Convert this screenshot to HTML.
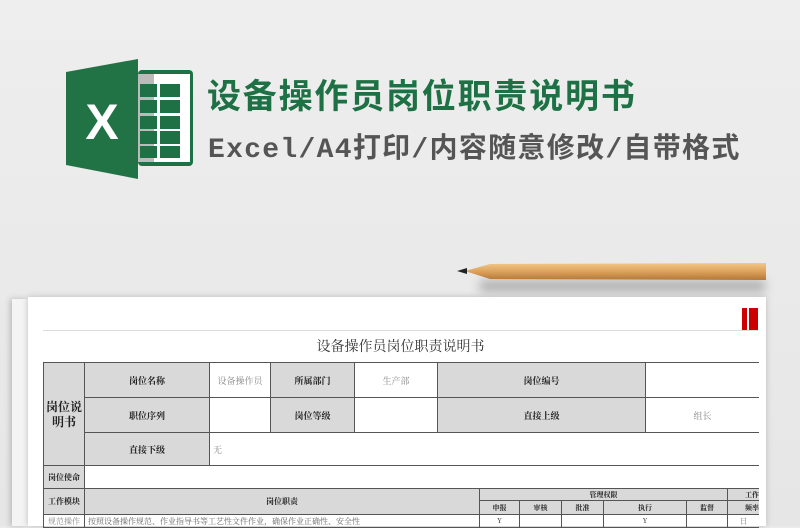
<!DOCTYPE html>
<html><head><meta charset="utf-8"><style>
*{margin:0;padding:0;box-sizing:border-box}
body{width:800px;height:526px;overflow:hidden;background:#ebebeb;position:relative;font-family:"Liberation Sans","Noto Sans CJK SC",sans-serif}
.a{position:absolute}
.c{position:absolute;border:1px solid #555;display:flex;align-items:center;justify-content:center;font-size:9px;color:#222;font-family:"Noto Serif CJK SC",serif;font-weight:bold}
.g{background:#d9d9d9}
.l{color:#888;font-weight:normal}
</style></head><body>
<div class="a" style="left:0;top:0;width:800px;height:526px;background:linear-gradient(#eeeeee,#e6e6e6)"></div>
<svg class="a" style="left:60px;top:55px" width="140" height="130">
<rect x="78" y="15" width="55" height="96" rx="4" fill="#1e7145"/>
<rect x="80" y="19" width="50" height="88" fill="#fff"/>
<rect x="78" y="19" width="16" height="88" fill="#bbb"/>
<g fill="#1e7145">
<rect x="80" y="29" width="17" height="13"/><rect x="100" y="29" width="20" height="13"/>
<rect x="80" y="45" width="17" height="13"/><rect x="100" y="45" width="20" height="13"/>
<rect x="80" y="61" width="17" height="13"/><rect x="100" y="61" width="20" height="13"/>
<rect x="80" y="76" width="17" height="13"/><rect x="100" y="76" width="20" height="13"/>
<rect x="80" y="91" width="17" height="12"/><rect x="100" y="91" width="20" height="12"/>
</g>
<polygon points="6,17 78,4 78,124 6,110" fill="#217346"/>
<text x="42" y="84" font-size="50" font-weight="bold" fill="#fff" text-anchor="middle" font-family="Liberation Sans Narrow,Liberation Sans,sans-serif">X</text>
</svg>
<div class="a" style="left:207px;top:72px;font-size:34px;font-weight:bold;color:#1e7145;font-family:'Noto Sans CJK SC',sans-serif;line-height:44px;letter-spacing:1.8px">设备操作员岗位职责说明书</div>
<div class="a" style="left:208px;top:133px;font-size:28px;color:#555;font-family:'Liberation Mono','Noto Sans CJK SC',monospace;line-height:36px;font-weight:bold;letter-spacing:1.3px">Excel/A4打印/内容随意修改/自带格式</div>
<div class="a" style="left:480px;top:280px;width:285px;height:12px;background:#999;filter:blur(5px);opacity:.7"></div>
<svg class="a" style="left:455px;top:260px" width="315" height="25">
<defs><linearGradient id="p" x1="0" y1="0" x2="0" y2="1"><stop offset="0" stop-color="#f2c888"/><stop offset=".5" stop-color="#dca25c"/><stop offset="1" stop-color="#b57838"/></linearGradient></defs>
<polygon points="10,11 35,4 311,3 311,20 35,19" fill="url(#p)"/>
<polygon points="2,11 12,8 12,14" fill="#222"/>
</svg>
<div class="a" style="left:12px;top:299px;width:16px;height:227px;background:#f4f4f4;box-shadow:-2px 0 6px #bbb"></div>
<div class="a" style="left:28px;top:297px;width:738px;height:229px;background:#fff;box-shadow:0 0 6px #bbb"></div>
<div class="a" style="left:742px;top:308px;width:5px;height:22px;background:#c00"></div>
<div class="a" style="left:749px;top:308px;width:9px;height:22px;background:#c00"></div>
<div class="a" style="left:43px;top:330px;width:715px;height:1px;background:#ddd"></div>
<div class="a" style="left:43px;top:336px;width:715px;text-align:center;font-size:14px;color:#333;font-family:'Noto Serif CJK SC',serif">设备操作员岗位职责说明书</div>
<div class="c g" style="left:43px;top:362px;width:42px;height:104px;font-size:12px;line-height:15px;text-align:center">岗位说<br>明书</div>
<div class="c g" style="left:84px;top:362px;width:126px;height:36px">岗位名称</div>
<div class="c l" style="left:209px;top:362px;width:62px;height:36px">设备操作员</div>
<div class="c g" style="left:270px;top:362px;width:85px;height:36px">所属部门</div>
<div class="c l" style="left:354px;top:362px;width:84px;height:36px">生产部</div>
<div class="c g" style="left:437px;top:362px;width:209px;height:36px">岗位编号</div>
<div class="c" style="left:645px;top:362px;width:114px;height:36px;border-right:none"></div>
<div class="c g" style="left:84px;top:397px;width:126px;height:36px">职位序列</div>
<div class="c" style="left:209px;top:397px;width:62px;height:36px"></div>
<div class="c g" style="left:270px;top:397px;width:85px;height:36px">岗位等级</div>
<div class="c" style="left:354px;top:397px;width:84px;height:36px"></div>
<div class="c g" style="left:437px;top:397px;width:209px;height:36px">直接上级</div>
<div class="c l" style="left:645px;top:397px;width:114px;height:36px;border-right:none">组长</div>
<div class="c g" style="left:84px;top:432px;width:126px;height:34px">直接下级</div>
<div class="c l" style="left:209px;top:432px;width:550px;height:34px;border-right:none;justify-content:flex-start;padding-left:3px">无</div>
<div class="c g" style="left:43px;top:465px;width:42px;height:24px;font-size:8px">岗位使命</div>
<div class="c" style="left:84px;top:465px;width:675px;height:24px;border-right:none"></div>
<div class="c g" style="left:43px;top:488px;width:42px;height:27px;font-size:8px">工作模块</div>
<div class="c g" style="left:84px;top:488px;width:396px;height:27px;font-size:8px">岗位职责</div>
<div class="c g" style="left:479px;top:488px;width:249px;height:13px;font-size:7px">管理权限</div>
<div class="c g" style="left:727px;top:488px;width:32px;height:13px;font-size:7px;border-right:none;justify-content:flex-end">工作</div>
<div class="c g" style="left:479px;top:500px;width:41px;height:15px;font-size:7px">申报</div>
<div class="c g" style="left:519px;top:500px;width:43px;height:15px;font-size:7px">审核</div>
<div class="c g" style="left:561px;top:500px;width:43px;height:15px;font-size:7px">批准</div>
<div class="c g" style="left:603px;top:500px;width:84px;height:15px;font-size:7px">执行</div>
<div class="c g" style="left:686px;top:500px;width:42px;height:15px;font-size:7px">监督</div>
<div class="c g" style="left:727px;top:500px;width:32px;height:15px;font-size:7px;border-right:none;justify-content:flex-end">频率</div>
<div class="c l" style="left:43px;top:514px;width:42px;height:14px;font-size:8px">规范操作</div>
<div class="c l" style="left:84px;top:514px;width:396px;height:14px;font-size:8px;justify-content:flex-start;padding-left:3px;color:#666">按照设备操作规范、作业指导书等工艺性文件作业，确保作业正确性、安全性</div>
<div class="c" style="left:479px;top:514px;width:41px;height:14px;font-size:7px;font-weight:normal">Y</div>
<div class="c" style="left:519px;top:514px;width:43px;height:14px"></div>
<div class="c" style="left:561px;top:514px;width:43px;height:14px"></div>
<div class="c" style="left:603px;top:514px;width:84px;height:14px;font-size:7px;font-weight:normal">Y</div>
<div class="c" style="left:686px;top:514px;width:42px;height:14px"></div>
<div class="c l" style="left:727px;top:514px;width:32px;height:14px;border-right:none;font-size:8px">日</div>
</body></html>
